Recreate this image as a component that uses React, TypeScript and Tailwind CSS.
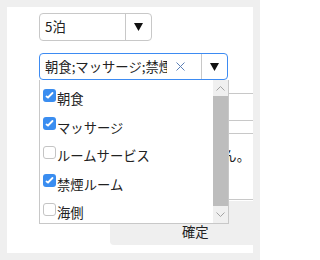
import React from 'react';

const font = { fontFamily: '"Noto Sans CJK JP", "Noto Sans", sans-serif' };

const items = [
  { label: '朝食', checked: true },
  { label: 'マッサージ', checked: true },
  { label: 'ルームサービス', checked: false },
  { label: '禁煙ルーム', checked: true },
  { label: '海側', checked: false },
];

const Caret = () => (
  <svg width="9" height="8" viewBox="0 0 9 8">
    <polygon points="0,0 9,0 4.5,8" fill="#111" />
  </svg>
);

const Box: React.FC<{ checked: boolean }> = ({ checked }) =>
  checked ? (
    <span className="mb-[8px] flex h-[13px] w-[13px] shrink-0 items-center justify-center rounded-[3px] bg-[#3a8df0]">
      <svg width="13" height="13" viewBox="0 0 13 13">
        <polyline points="3.5,7.5 5,8.5 9.5,4" fill="none" stroke="#fff" strokeWidth="1.8" strokeLinecap="round" />
      </svg>
    </span>
  ) : (
    <span className="mb-[8px] h-[13px] w-[13px] shrink-0 rounded-[3px] border border-[#c4c4c4] bg-white" />
  );

export default function App() {
  return (
    <div className="h-[260px] w-[260px] overflow-hidden bg-[#efefef] p-[7px] text-[13.33px] text-[#222]" style={font}>
      <div className="relative h-[246px] w-[246px] overflow-hidden bg-white">
        <div className="flex w-[246px] flex-col pl-[32px] pt-[6px]">
          {/* nights select */}
          <div className="flex h-[28px] w-[113px] items-stretch rounded-[4px] border border-[#c8c8c8]">
            <div className="flex w-[85px] items-center pl-[5px]">5泊</div>
            <div className="flex w-[25px] items-center justify-center border-l border-[#c8c8c8]">
              <Caret />
            </div>
          </div>

          {/* multi select */}
          <div className="relative mt-[12px] w-[189px]">
            <div className="flex h-[27px] w-[189px] items-stretch rounded-[4px] border border-[#3d8bf2]">
              <div className="flex w-[127px] items-center overflow-hidden whitespace-nowrap pl-[5px]">
                朝食;マッサージ;禁煙ルーム
              </div>
              <div className="flex w-[34px] items-center pl-[9px]">
                <svg width="9" height="9" viewBox="0 0 9 9">
                  <path d="M0.5 0.5 L8.5 8.5 M8.5 0.5 L0.5 8.5" stroke="#5b7fb6" strokeWidth="1" fill="none" />
                </svg>
              </div>
              <div className="flex flex-1 items-center justify-center border-l border-[#c8c8c8]">
                <Caret />
              </div>
            </div>

            {/* dropdown */}
            <div className="absolute left-0 top-full z-10 flex h-[144px] w-[190px] border border-t-0 border-[#c8c8c8] bg-white">
              <div className="flex flex-1 flex-col overflow-hidden pt-[5px]">
                {items.map((it) => (
                  <div key={it.label} className="flex h-[28.5px] shrink-0 items-center pl-[3px]">
                    <Box checked={it.checked} />
                    <span className="ml-[1px] whitespace-nowrap">{it.label}</span>
                  </div>
                ))}
              </div>
              <div className="flex w-[15px] flex-col">
                <div className="flex h-[16px] items-center justify-center bg-[#f0f0f0]">
                  <svg width="9" height="5" viewBox="0 0 9 5">
                    <polyline points="0.5,4.5 4.5,0.5 8.5,4.5" fill="none" stroke="#a3a3a3" strokeWidth="1" />
                  </svg>
                </div>
                <div className="h-[110px] bg-[#bdbdbd]" />
                <div className="flex flex-1 items-center justify-center bg-[#f0f0f0]">
                  <svg width="9" height="5" viewBox="0 0 9 5">
                    <polyline points="0.5,0.5 4.5,4.5 8.5,0.5" fill="none" stroke="#a3a3a3" strokeWidth="1" />
                  </svg>
                </div>
              </div>
            </div>
          </div>

          {/* content behind the dropdown */}
          <div className="flex w-[214px] flex-col overflow-hidden">
            <div className="h-[13px]" />
            <div className="h-[27px] border-t border-[#c8c8c8]" />
            <div className="h-[13px] border-t border-[#c8c8c8]" />
            <div className="h-[66px] border-t border-[#c8c8c8] pt-[12px]">
              <div className="w-[211px] whitespace-nowrap text-right leading-[20px]">該当する項目はありません。</div>
            </div>
            <div className="border-t border-[#c8c8c8] pt-[1px]">
              <div className="ml-[71px] flex h-[44px] w-[143px] items-start justify-start rounded-l-[4px] bg-[#efefef] pl-[72px] pt-[21px] leading-[20px]">
                確定
              </div>
            </div>
          </div>
        </div>
      </div>
    </div>
  );
}
